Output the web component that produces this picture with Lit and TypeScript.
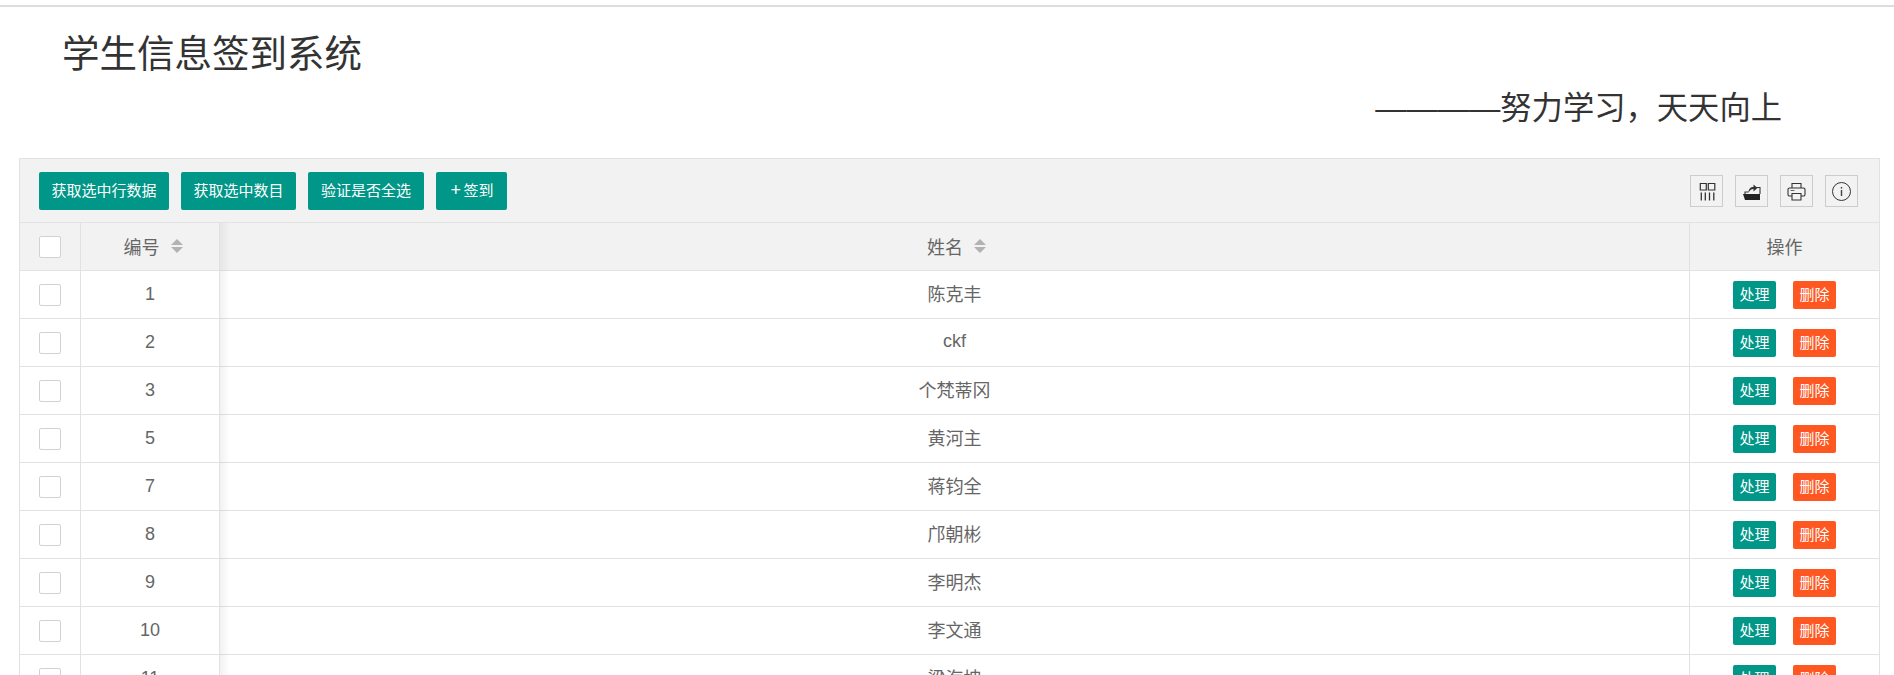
import { LitElement, html, css, svg } from "lit";
import { customElement } from "lit/decorators.js";

const ROWS: [string, string][] = [
  ["1", "陈克丰"], ["2", "ckf"], ["3", "个梵蒂冈"], ["5", "黄河主"], ["7", "蒋钧全"],
  ["8", "邝朝彬"], ["9", "李明杰"], ["10", "李文通"], ["11", "梁海坤"],
];

const ICONS = [
  svg`<path d="M3.300 1.500h6v6.500h-6zM11.300 1.500h6.500v6.500h-6.500z" fill="none" stroke="#333" stroke-width="1.200"/><path d="M4.300 10.500v8M8.300 10.500v8M12.500 10.500v8M16.800 10.500v8" stroke="#333" stroke-width="1.300"/>`,
  svg`<path d="M1 12h17v6H3z" fill="#222"/><path d="M3 12V10h3.500M13 5.500h5V12" fill="none" stroke="#333" stroke-width="1.100"/><path d="M6.500 10.500c0-3.500 2-5.500 5-5.500V2.500l4 3.500-4 3.500V7c-2 0-3.500 1-5 3.500z" fill="#333"/>`,
  svg`<path d="M5 6V1.500h9V6M5 14H2.500A1.500 1.500 0 0 1 1 12.500v-5A1.500 1.500 0 0 1 2.500 6h14A1.500 1.500 0 0 1 18 7.500v5a1.500 1.500 0 0 1-1.500 1.500H14" fill="none" stroke="#333" stroke-width="1.100"/><path d="M5 11.500h9V18H5z" fill="none" stroke="#333" stroke-width="1.100"/><path d="M3.500 8.500h4" stroke="#666"/>`,
  svg`<circle cx="9.500" cy="9.500" r="9" fill="none" stroke="#333" stroke-width="1"/><path d="M9.500 8v6" stroke="#444" stroke-width="1.400"/><path d="M9.500 5v1.600" stroke="#444" stroke-width="1.400"/>`,
];

@customElement("app-root")
export class AppRoot extends LitElement {
  static styles = css`
    :host { display: block; height: 675px; overflow: hidden; background: #fff; color: #333;
      font-family: "Liberation Sans", "Noto Sans CJK SC", sans-serif; font-size: 14px; }
    .rule { height: 2px; background: #ddd; margin-top: 5px; }
    h1 { margin: 0; padding: 27px 0 0 62px; font-size: 37.500px; line-height: 40px; font-weight: 400; }
    h2 { margin: 0; padding: 15px 112px 0 0; font-size: 31.300px; line-height: 40px; font-weight: 400; text-align: right; }
    .table { margin: 29px 14px 0 19px; border: 1px solid #e2e2e2; position: relative; }
    .toolbar { height: 64px; box-sizing: border-box; padding: 13px 21px 0 19px; background: #f2f2f2; display: flex; border-bottom: 1px solid #e2e2e2; }
    .btn { height: 38px; line-height: 37px; padding: 0 12.500px; margin-right: 12px; background: #009688; color: #fff; border-radius: 2px; font-size: 15px; white-space: nowrap; }
    .btn.wide { padding: 0 13px; }
    .btn.add { padding: 0 13px 0 14.500px; }
    .plus { display: inline-block; width: 13px; text-align: left; font-size: 18px; }
    .tools { margin-left: auto; display: flex; gap: 12px; padding-top: 3px; }
    .tool { width: 33px; height: 32px; box-sizing: border-box; border: 1px solid #ccc; display: flex; align-items: center; justify-content: center; }
    .tool svg { width: 19px; height: 19px; }
    .row { display: grid; grid-template-columns: 61px 139px 1fr 189px; height: 48px; box-sizing: border-box; border-bottom: 1px solid #e2e2e2; color: #666; font-size: 18px; }
    .row.head { background: #f2f2f2; }
    .cell { display: flex; align-items: center; justify-content: center; border-right: 1px solid #e2e2e2; box-sizing: border-box; }
    .cell:last-child { border-right: 0; }
    .name { padding-bottom: 3px; }
    .title { padding-bottom: 2px; }
    .title.no { padding-left: 6px; }
    .title.nm { padding-left: 4px; }
    .check { width: 22px; height: 22px; box-sizing: border-box; border: 1px solid #d2d2d2; background: #fff; border-radius: 2px; }
    .sort { display: inline-flex; flex-direction: column; gap: 2px; margin-left: 11px; }
    .up { width: 0; height: 0; border: 6.500px solid transparent; border-top: 0; border-bottom: 6.500px solid #b2b2b2; }
    .down { width: 0; height: 0; border: 6.500px solid transparent; border-bottom: 0; border-top: 6.500px solid #b2b2b2; }
    .mini { height: 28px; line-height: 27px; width: 43px; text-align: center; border-radius: 2px; color: #fff; font-size: 15px; }
    .mini.ok { background: #009688; margin-right: 17px; }
    .mini.del { background: #ff5722; }
    .shadow { position: absolute; left: 200px; top: 64px; bottom: 0; width: 10px; pointer-events: none;
      background: linear-gradient(to right, rgba(0,0,0,.05), rgba(0,0,0,0)); }
  `;

  private sort() {
    return html`<span class="sort"><i class="up"></i><i class="down"></i></span>`;
  }

  render() {
    return html`
      <div class="rule"></div>
      <h1>学生信息签到系统</h1>
      <h2>————努力学习，天天向上</h2>
      <div class="table">
        <div class="toolbar">
          <div class="btn">获取选中行数据</div>
          <div class="btn">获取选中数目</div>
          <div class="btn wide">验证是否全选</div>
          <div class="btn add"><span class="plus">+</span>签到</div>
          <div class="tools">
            ${ICONS.map((i) => html`<div class="tool"><svg viewBox="0 0 19 19">${i}</svg></div>`)}
          </div>
        </div>
        <div class="row head">
          <div class="cell"><span class="check"></span></div>
          <div class="cell title no">编号${this.sort()}</div>
          <div class="cell title nm">姓名${this.sort()}</div>
          <div class="cell title">操作</div>
        </div>
        ${ROWS.map(([id, name]) => html`
          <div class="row">
            <div class="cell"><span class="check"></span></div>
            <div class="cell">${id}</div>
            <div class="cell name">${name}</div>
            <div class="cell"><span class="mini ok">处理</span><span class="mini del">删除</span></div>
          </div>`)}
        <div class="shadow"></div>
      </div>
    `;
  }
}
